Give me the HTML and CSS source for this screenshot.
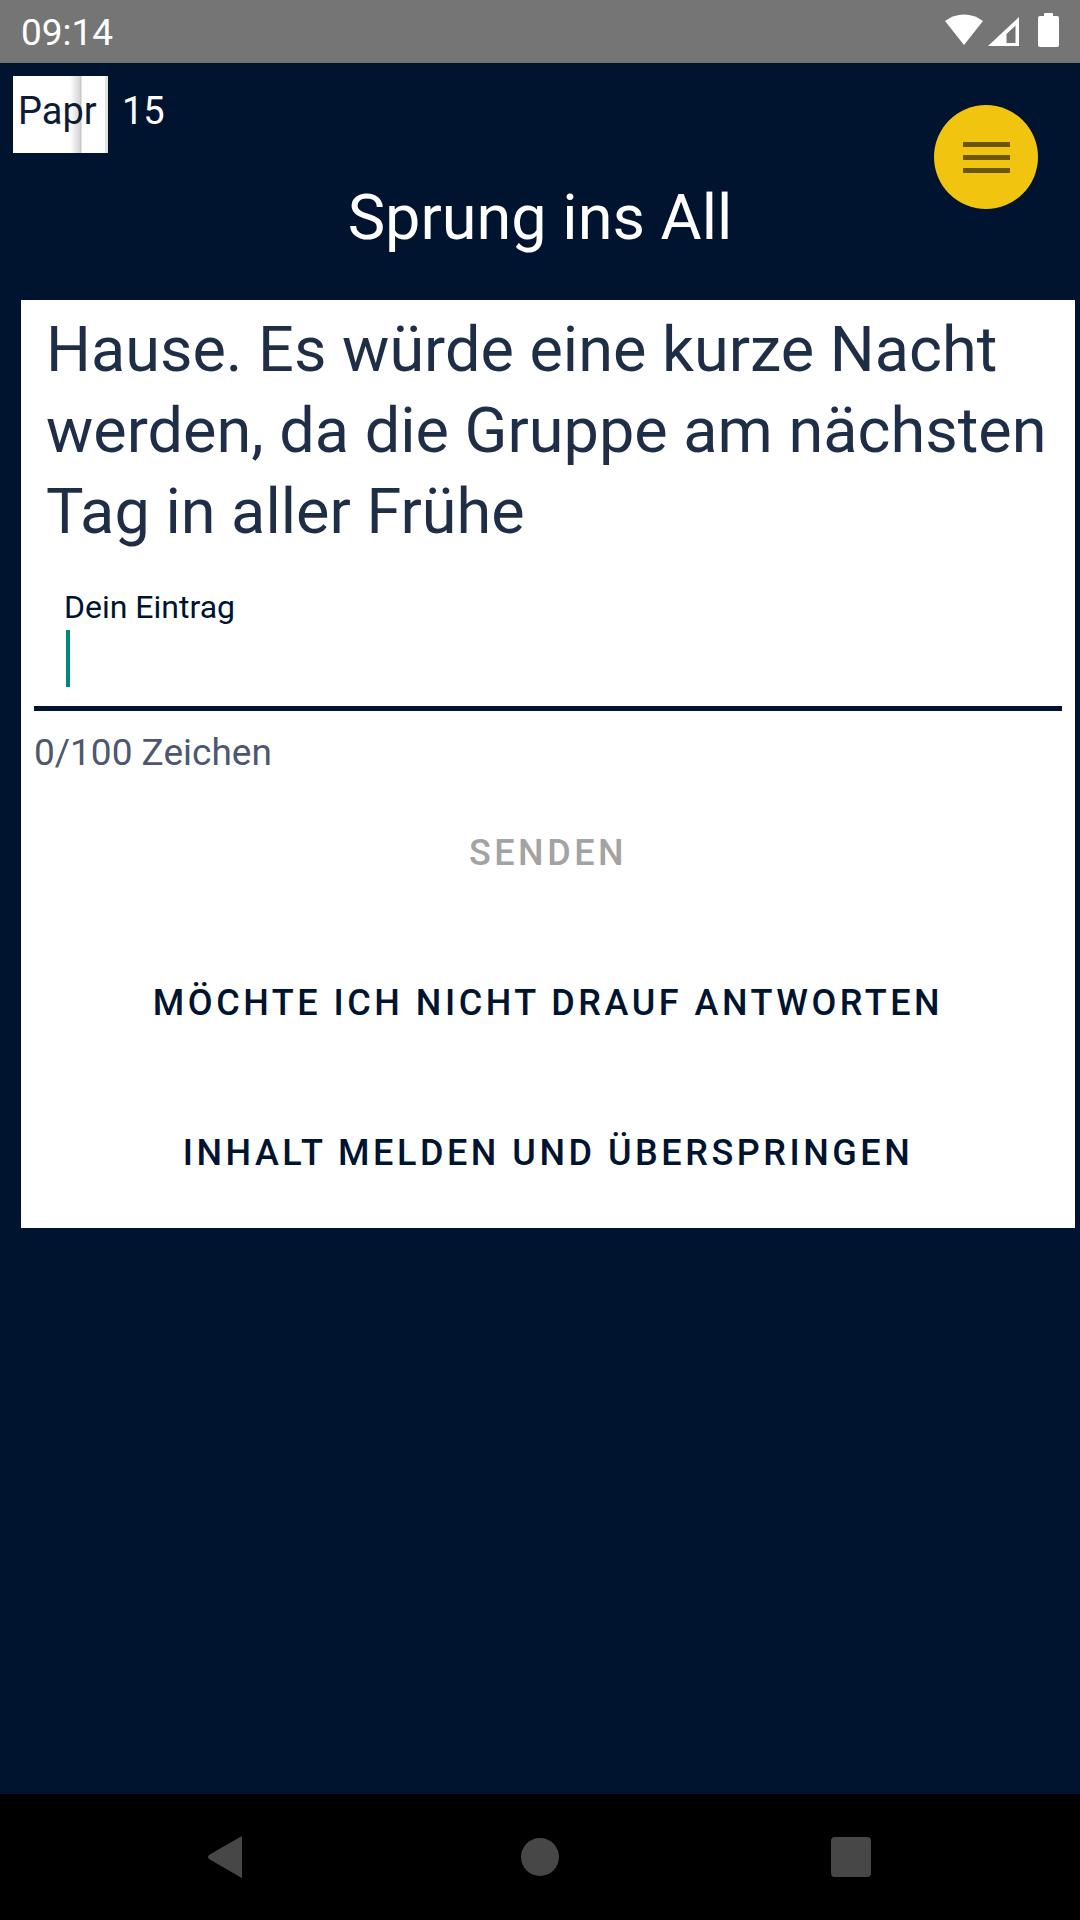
FILE: index.html
```html
<!DOCTYPE html>
<html lang="de">
<head>
<meta charset="utf-8">
<title>Sprung ins All</title>
<link rel="stylesheet" href="styles.css">
</head>
<body>
  <div class="statusbar">
    <span class="time">09:14</span>
    <svg class="status-icons" viewBox="945 13 114 34" width="114" height="34">
      <path d="M964 45 L945 21 A30.6 30.6 0 0 1 983 21 Z" fill="#fff"/>
      <path d="M988 46 L1019 46 L1019 17 Z" fill="#fff"/>
      <path d="M1006.5 43 L1015.5 43 L1015.5 25.5 L1006.5 34 Z" fill="#757575"/>
      <rect x="1044" y="13" width="9" height="5" rx="1" fill="#fff"/>
      <rect x="1038" y="16" width="21" height="31" rx="2" fill="#fff"/>
    </svg>
  </div>

  <main class="app">
    <header class="header">
      <div class="brand">
        <div class="brand-box">Papr</div>
        <span class="brand-count">15</span>
      </div>
      <h1 class="title">Sprung ins All</h1>
      <button class="menu-fab" aria-label="Menü">
        <svg viewBox="0 0 47 31" width="47" height="31">
          <rect x="0" y="0" width="47" height="5" fill="rgba(0,0,0,0.56)"/>
          <rect x="0" y="13" width="47" height="5" fill="rgba(0,0,0,0.56)"/>
          <rect x="0" y="26" width="47" height="5" fill="rgba(0,0,0,0.56)"/>
        </svg>
      </button>
    </header>

    <section class="card">
      <p class="story">Hause. Es würde eine kurze Nacht werden, da die Gruppe am nächsten Tag in aller Frühe</p>
      <div class="field">
        <div class="field-label">Dein Eintrag</div>
        <div class="field-input"><span class="caret"></span></div>
        <div class="counter">0/100 Zeichen</div>
      </div>
      <div class="actions">
        <button class="action action-disabled">Senden</button>
        <button class="action">Möchte ich nicht drauf antworten</button>
        <button class="action">Inhalt melden und überspringen</button>
      </div>
    </section>
  </main>

  <nav class="navbar">
    <svg class="nav-icon" viewBox="0 0 40 44" width="40" height="44">
      <path d="M37 2 L37 42 Q37 44 35.5 42.3 L4 24 Q2 22 4 20 L35.5 1.7 Q37 0 37 2 Z" fill="#474747"/>
    </svg>
    <span class="nav-home"></span>
    <span class="nav-recent"></span>
  </nav>
</body>
</html>
```
FILE: styles.css
```css
* {
  box-sizing: border-box;
  margin: 0;
  padding: 0;
}

html,
body {
  width: 1080px;
  height: 1920px;
}

body {
  background: #001430;
  font-family: Roboto, "Noto Sans", sans-serif;
  display: flex;
  flex-direction: column;
  overflow: hidden;
}

/* Status bar */
.statusbar {
  height: 63px;
  flex: none;
  background: #757575;
  display: flex;
  align-items: center;
  justify-content: space-between;
  padding: 0 21px 0 21px;
  color: #fff;
}

.time {
  font-size: 37px;
  line-height: 1;
  padding-top: 2px;
}

.status-icons {
  display: block;
  margin-top: -3px;
}

/* App area */
.app {
  position: relative;
  flex: 1;
}

.header {
  position: relative;
}

.brand {
  display: flex;
  align-items: baseline;
  padding: 13px 0 0 13px;
}

.brand-box {
  width: 95px;
  height: 77px;
  padding: 13px 0 0 5px;
  font-size: 38px;
  line-height: 45px;
  color: #0d1b33;
  white-space: nowrap;
  background: linear-gradient(to right,
      #fff 0, #fff 57px, #d4d4d4 67px, #c2c2c2 68px, #fff 69px,
      #fff 92px, #e2e2e2 92px, #e2e2e2 95px);
}

.brand-count {
  margin-left: 14px;
  font-size: 38px;
  color: #fff;
}

.title {
  margin-top: 27px;
  font-size: 63px;
  font-weight: 400;
  line-height: 75px;
  text-align: center;
  color: #fff;
}

.menu-fab {
  position: absolute;
  top: 42px;
  right: 42px;
  width: 104px;
  height: 104px;
  border: none;
  border-radius: 50%;
  background: #f1c40f;
  display: flex;
  align-items: center;
  justify-content: center;
  padding-top: 1px;
}

.menu-fab svg {
  display: block;
  width: 47px;
  height: 31px;
}

/* Card */
.card {
  margin: 45px 5px 0 21px;
  background: #fff;
  padding-top: 9px;
}

.story {
  padding: 0 6px 0 25px;
  font-size: 63px;
  line-height: 81px;
  color: #1f2e47;
}

.field {
  margin: 37px 13px 0 13px;
}

.field-label {
  padding-left: 30px;
  font-size: 32px;
  line-height: 36px;
  color: #001430;
}

.field-input {
  height: 86px;
  padding: 5px 0 0 32px;
  border-bottom: 5px solid #001430;
}

.caret {
  display: block;
  width: 4px;
  height: 57px;
  background: #00897b;
}

.counter {
  margin-top: 20px;
  font-size: 37px;
  line-height: 43px;
  color: #4d5870;
}

.actions {
  margin-top: 4px;
  display: flex;
  flex-direction: column;
}

.action {
  height: 150px;
  border: none;
  background: transparent;
  font-family: Roboto, "Noto Sans", sans-serif;
  font-size: 36px;
  font-weight: 500;
  letter-spacing: 0.098em;
  text-transform: uppercase;
  color: #001430;
}

.action-disabled {
  color: #a3a3a3;
}

/* Navigation bar */
.navbar {
  flex: none;
  height: 126px;
  background: #000;
  display: flex;
  align-items: center;
  padding-left: 205px;
}

.nav-icon {
  display: block;
}

.nav-home {
  width: 38px;
  height: 38px;
  border-radius: 50%;
  background: #474747;
  margin-left: 276px;
}

.nav-recent {
  width: 40px;
  height: 40px;
  border-radius: 4px;
  background: #474747;
  margin-left: 272px;
}
```
